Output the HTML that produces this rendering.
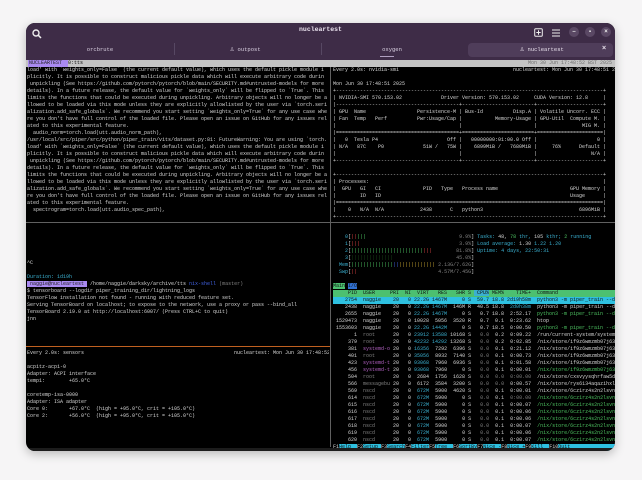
<!DOCTYPE html>
<html><head><meta charset="utf-8"><style>
*{margin:0;padding:0;box-sizing:border-box}
body{width:642px;height:480px;background:#f6f5f6;position:relative;overflow:hidden;font-family:"Liberation Mono",monospace}
#win{position:absolute;left:26px;top:23px;width:589px;height:428px;border-radius:9px;background:#000;overflow:hidden;box-shadow:0 3px 10px rgba(0,0,0,.25)}
#tb{position:absolute;left:0;top:0;width:589px;height:38px;background:#3e2c47}
.t{position:absolute;color:#e8e0ec;font-family:"Liberation Sans",sans-serif;font-size:7px}
pre{position:absolute;font-family:"Liberation Mono",monospace;font-size:5px;line-height:7px;color:#d4d4d4;white-space:pre;overflow:hidden}
.c{color:#3ab0d0}.g{color:#4cc060}.r{color:#d04040}.b{color:#4060e0}.y{color:#c0a030}.m{color:#b060c0}.d{color:#808080}
.circ{position:absolute;width:10px;height:10px;border-radius:50%;background:#5a4864;color:#eee;font-size:6px;text-align:center;line-height:10px;font-family:"Liberation Sans",sans-serif;font-weight:bold}
</style></head><body>
<div id="win">
<div id="tb">
 <svg style="position:absolute;left:6px;top:6px" width="10" height="10" viewBox="0 0 10 10"><circle cx="4" cy="4" r="3" fill="none" stroke="#eee" stroke-width="1.4"/><line x1="6.2" y1="6.2" x2="9" y2="9" stroke="#eee" stroke-width="1.5"/></svg>
 <div class="t" style="left:0;width:589px;top:3px;text-align:center;font-weight:bold;font-family:'Liberation Mono',monospace;font-size:6.5px">nucleartest</div>
 <svg style="position:absolute;left:508px;top:5px" width="9" height="9" viewBox="0 0 9 9"><rect x=".7" y=".7" width="7.6" height="7.6" rx="1" fill="none" stroke="#eee" stroke-width="1"/><path d="M4.5 2.3v4.4M2.3 4.5h4.4" stroke="#eee" stroke-width="1"/></svg>
 <svg style="position:absolute;left:526px;top:6px" width="8" height="8" viewBox="0 0 8 8"><path d="M0 1h8M0 4h8M0 7h8" stroke="#eee" stroke-width="1.1"/></svg>
 <div class="circ" style="left:543px;top:4px">–</div>
 <div class="circ" style="left:559px;top:4px">▪</div>
 <div class="circ" style="left:575px;top:4px">×</div>
 <div class="t" style="left:0;width:148px;top:23px;text-align:center;font-family:'Liberation Mono',monospace;font-size:5.5px;color:#d8cfe0">orcbrute</div>
 <div style="position:absolute;left:148px;top:20px;width:1px;height:12px;background:#574863"></div>
 <div class="t" style="left:204px;top:22px;font-family:'Liberation Mono',monospace;font-size:5.5px;color:#d8cfe0"><b style="font-size:7px">♙</b> outpost</div>
 <div style="position:absolute;left:295px;top:20px;width:1px;height:12px;background:#574863"></div>
 <div class="t" style="left:296px;width:140px;top:23px;text-align:center;font-family:'Liberation Mono',monospace;font-size:5.5px;color:#d8cfe0">oxygen</div>
 <div style="position:absolute;left:354px;top:33px;width:14px;height:1px;background:#b0a0c0"></div>
 <div style="position:absolute;left:442px;top:20px;width:145px;height:14px;border-radius:4px;background:#4f3d5a"></div>
 <div class="t" style="left:494px;top:22px;font-family:'Liberation Mono',monospace;font-size:5.5px"><b style="font-size:7px">♙</b> nucleartest</div>
 <div class="t" style="left:576px;top:22px;font-size:7px;font-weight:bold">×</div>
</div>
<div style="position:absolute;left:0;top:37px;width:589px;height:7px;background:#c4c4c4"></div>
<div style="position:absolute;left:2px;top:37px;width:40px;height:7px;background:#a98af0"></div>
<pre style="left:3px;top:37px;color:#222">NUCLEARTEST  <span style="color:#111">0:tts</span></pre>
<pre style="right:3px;top:37px;color:#707070">Mon 30 Jun 17:48:52 BST 2025</pre>

<pre style="left:1px;top:44px;width:302px">load' with `weights_only=False` (the current default value), which uses the default pickle module i
plicitly. It is possible to construct malicious pickle data which will execute arbitrary code durin
 unpickling (See https://github.com/pytorch/pytorch/blob/main/SECURITY.md#untrusted-models for more
details). In a future release, the default value for `weights_only` will be flipped to `True`. This
limits the functions that could be executed during unpickling. Arbitrary objects will no longer be a
llowed to be loaded via this mode unless they are explicitly allowlisted by the user via `torch.seri
alization.add_safe_globals`. We recommend you start setting `weights_only=True` for any use case whe
re you don't have full control of the loaded file. Please open an issue on GitHub for any issues rel
ated to this experimental feature.
  audio_norm=torch.load(utt.audio_norm_path),
/usr/local/src/piper/src/python/piper_train/vits/dataset.py:81: FutureWarning: You are using `torch.
load' with `weights_only=False` (the current default value), which uses the default pickle module i
plicitly. It is possible to construct malicious pickle data which will execute arbitrary code durin
 unpickling (See https://github.com/pytorch/pytorch/blob/main/SECURITY.md#untrusted-models for more
details). In a future release, the default value for `weights_only` will be flipped to `True`. This
limits the functions that could be executed during unpickling. Arbitrary objects will no longer be a
llowed to be loaded via this mode unless they are explicitly allowlisted by the user via `torch.seri
alization.add_safe_globals`. We recommend you start setting `weights_only=True` for any use case whe
re you don't have full control of the loaded file. Please open an issue on GitHub for any issues rel
ated to this experimental feature.
  spectrogram=torch.load(utt.audio_spec_path),</pre>
<div style="position:absolute;left:0;top:199px;width:304px;height:1px;background:#606060"></div>
<div style="position:absolute;left:304px;top:44px;width:1px;height:380px;background:#606060"></div>
<div style="position:absolute;left:305px;top:199px;width:284px;height:1px;background:#606060"></div>
<div style="position:absolute;left:0;top:323px;width:304px;height:1px;background:#c06020"></div>

<pre style="left:1px;top:237px;width:302px">^C

<span class="c">Duration: 1d19h</span>
<span style="background:#a98af0;color:#222"> naggie@nucleartest </span> /home/naggie/darksky/archive/tts <span class="b">nix-shell</span> <span class="d">(master)</span>
$ tensorboard --logdir piper_training_dir/lightning_logs
TensorFlow installation not found - running with reduced feature set.
Serving TensorBoard on localhost; to expose to the network, use a proxy or pass --bind_all
TensorBoard 2.19.0 at http://localhost:6007/ (Press CTRL+C to quit)
jnn</pre>

<pre style="left:1px;top:327px;width:302px">Every 2.0s: sensors                                                  nucleartest: Mon Jun 30 17:48:52 2025

acpitz-acpi-0
Adapter: ACPI interface
temp1:        +65.0°C

coretemp-isa-0000
Adapter: ISA adapter
Core 0:       +67.0°C  (high = +95.0°C, crit = +105.0°C)
Core 2:       +56.0°C  (high = +95.0°C, crit = +105.0°C)</pre>

<pre style="left:307px;top:44px;width:282px">Every 2.0s: nvidia-smi                                      nucleartest: Mon Jun 30 17:48:51 2025

Mon Jun 30 17:48:51 2025
+-----------------------------------------------------------------------------------------+
| NVIDIA-SMI 570.153.02             Driver Version: 570.153.02     CUDA Version: 12.8     |
|-----------------------------------------+------------------------+----------------------+
| GPU  Name                 Persistence-M | Bus-Id          Disp.A | Volatile Uncorr. ECC |
| Fan  Temp   Perf          Pwr:Usage/Cap |           Memory-Usage | GPU-Util  Compute M. |
|                                         |                        |               MIG M. |
|=========================================+========================+======================|
|   0  Tesla P4                       Off |   00000000:01:00.0 Off |                    0 |
| N/A   87C    P0             51W /   75W |    6899MiB /   7680MiB |     76%      Default |
|                                         |                        |                  N/A |
+-----------------------------------------+------------------------+----------------------+

+-----------------------------------------------------------------------------------------+
| Processes:                                                                              |
|  GPU   GI   CI              PID   Type   Process name                        GPU Memory |
|        ID   ID                                                               Usage      |
|=========================================================================================|
|    0   N/A  N/A            2438      C   python3                                6896MiB |
+-----------------------------------------------------------------------------------------+</pre>

<pre style="left:307px;top:211px;width:282px"><span class="c">    0</span>[<span class="r">||</span><span class="g">|||</span>                               <span class="d">9.9%</span>] <span class="c">Tasks: </span>48, <span class="g">78</span><span class="c"> thr, </span>105<span class="c"> kthr; </span><span class="g">2</span><span class="c"> running</span>
<span class="c">    1</span>[<span class="r">|||</span>                                 <span class="d">3.9%</span>] <span class="c">Load average: </span>1.30 <span class="c">1.22 1.20</span>
<span class="c">    2</span>[<span class="g">||||||||||||||||||||||||</span><span class="r">|||</span>        <span class="d">81.8%</span>] <span class="c">Uptime: </span><span class="c">4 days, 22:50:31</span>
<span class="c">    3</span>[<span style="color:#1a4a1a">||||||||||||||</span>                     <span class="d">45.0%</span>]
<span class="c">  Mem</span>[<span class="g">||||||||||||||</span><span class="b">||</span><span class="y">||||||||||||</span> <span class="d">2.13G/7.62G</span>]
<span class="c">  Swp</span>[<span class="r">||</span>                           <span class="d">4.57M/7.45G</span>]

<span style="background:#4cc070;color:#111">Main</span> <span style="background:#3070d0;color:#111">I/O</span>
<span style="background:#4cc070;color:#111;display:inline-block;width:282px">     PID  USER     PRI  NI  VIRT   RES   SHR S <span style="background:#3ab0d0"> CPU%</span> MEM%    TIME+  Command</span>
<span style="background:#2ec0e0;color:#111;display:inline-block;width:282px">    2754  naggie    20   0 22.2G 1467M     0 S  59.7 18.8 2d19h58m  python3 -m piper_train --d</span>
    2438  naggie    20   0 <span class="c">22.2G 1467M</span>  146M R  40.5 18.8 <span class="c"> 2d0h38m</span>  python3 -m piper_train --d
    2655  naggie    20   0 <span class="c">22.2G 1467M</span>     0 S   0.7 18.8  2:52.17  <span class="g">python3 -m piper_train --d</span>
 1529473  naggie    20   0 10028  5056  3520 R   0.7  0.1  0:23.62  htop
 1553603  naggie    20   0 <span class="c">22.2G 1442M</span>     0 S   0.7 18.5  0:00.50  <span class="g">python3 -m piper_train --d</span>
       1  <span class="d">root</span>      20   0 <span class="c">23912 13588</span> 10168 S   <span class="d">0.0</span>  0.2  0:09.22  /run/current-system/systemd
     379  <span class="d">root</span>      20   0 <span class="c">42232 14292</span> 13268 S   <span class="d">0.0</span>  0.2  0:02.85  /nix/store/if9z6wmzmb07j63
     381  <span class="m">systemd-o</span> 20   0 <span class="c">16356</span>  7292  6396 S   <span class="d">0.0</span>  0.1  0:21.12  /nix/store/if9z6wmzmb07j63
     401  <span class="d">root</span>      20   0 <span class="c">35056</span>  8932  7140 S   <span class="d">0.0</span>  0.1  0:00.73  /nix/store/if9z6wmzmb07j63
     423  <span class="m">systemd-t</span> 20   0 <span class="c">93068</span>  7960  6936 S   <span class="d">0.0</span>  0.1  0:01.58  /nix/store/if9z6wmzmb07j63
     456  <span class="m">systemd-t</span> 20   0 <span class="c">93068</span>  7960     0 S   <span class="d">0.0</span>  0.1  0:00.01  <span class="g">/nix/store/if9z6wmzmb07j63</span>
     504  <span class="d">root</span>      20   0  2684  1756  1628 S   <span class="d">0.0</span>  <span class="d">0.0</span>  <span class="d">0:00.00</span>  /nix/store/cxsvyysqhrfaw5d
     566  <span class="d">messagebu</span> 20   0  6172  3584  3200 S   <span class="d">0.0</span>  <span class="d">0.0</span>  0:00.57  /nix/store/rys6134aqazihxl
     569  <span class="d">nscd</span>      20   0  <span class="c">672M</span>  5900  4620 S   <span class="d">0.0</span>  0.1  0:00.01  /nix/store/6cz1rz4s2n2lsvn6
     614  <span class="d">nscd</span>      20   0  <span class="c">672M</span>  5900     0 S   <span class="d">0.0</span>  0.1  <span class="d">0:00.00</span>  <span class="g">/nix/store/6cz1rz4s2n2lsvn6</span>
     615  <span class="d">nscd</span>      20   0  <span class="c">672M</span>  5900     0 S   <span class="d">0.0</span>  0.1  0:00.07  <span class="g">/nix/store/6cz1rz4s2n2lsvn6</span>
     616  <span class="d">nscd</span>      20   0  <span class="c">672M</span>  5900     0 S   <span class="d">0.0</span>  0.1  0:00.06  <span class="g">/nix/store/6cz1rz4s2n2lsvn6</span>
     617  <span class="d">nscd</span>      20   0  <span class="c">672M</span>  5900     0 S   <span class="d">0.0</span>  0.1  0:00.06  <span class="g">/nix/store/6cz1rz4s2n2lsvn6</span>
     618  <span class="d">nscd</span>      20   0  <span class="c">672M</span>  5900     0 S   <span class="d">0.0</span>  0.1  0:00.07  <span class="g">/nix/store/6cz1rz4s2n2lsvn6</span>
     619  <span class="d">nscd</span>      20   0  <span class="c">672M</span>  5900     0 S   <span class="d">0.0</span>  0.1  0:00.06  <span class="g">/nix/store/6cz1rz4s2n2lsvn6</span>
     620  <span class="d">nscd</span>      20   0  <span class="c">672M</span>  5900     0 S   <span class="d">0.0</span>  0.1  0:00.07  <span class="g">/nix/store/6cz1rz4s2n2lsvn6</span>
<span style="background:#2ec0e0;color:#111;display:inline-block;width:282px"><span style="background:#000;color:#ddd">F1</span>Help  <span style="background:#000;color:#ddd">F2</span>Setup <span style="background:#000;color:#ddd">F3</span>Search<span style="background:#000;color:#ddd">F4</span>Filter<span style="background:#000;color:#ddd">F5</span>Tree  <span style="background:#000;color:#ddd">F6</span>SortBy<span style="background:#000;color:#ddd">F7</span>Nice -<span style="background:#000;color:#ddd">F8</span>Nice +<span style="background:#000;color:#ddd">F9</span>Kill  <span style="background:#000;color:#ddd">F10</span>Quit</span></pre>
<div style="position:absolute;left:0;bottom:0;width:589px;height:3px;background:#1c1c1c"></div>
</div>
</body></html>
